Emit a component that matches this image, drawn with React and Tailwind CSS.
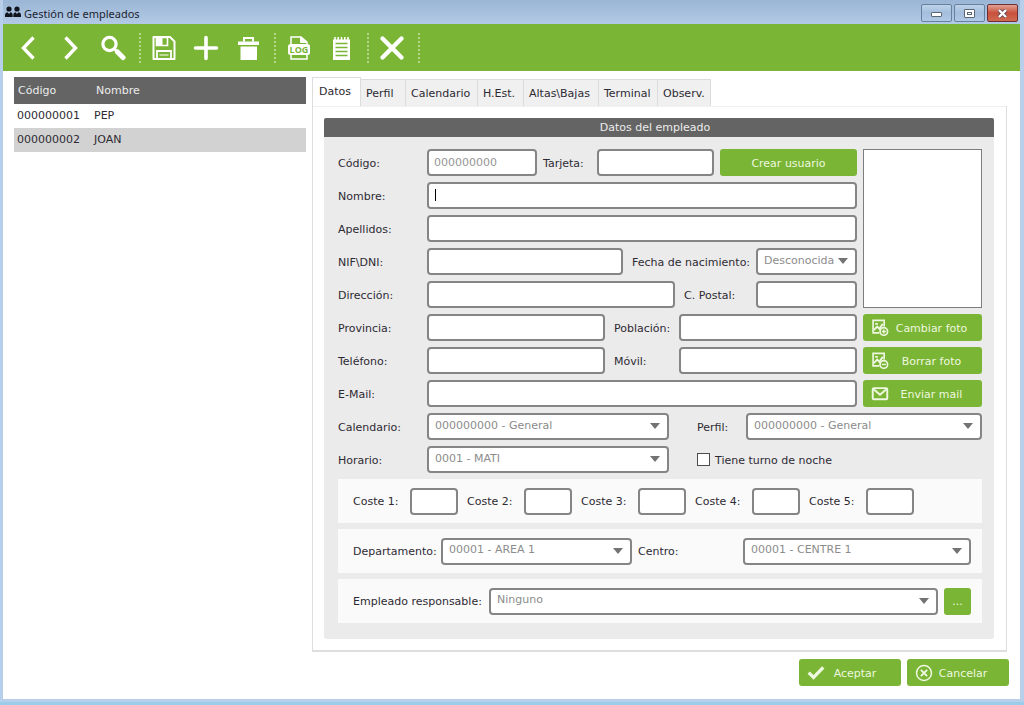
import { useState } from 'react';
import clsx from 'clsx';

const EMPLOYEES = [
  { code: '000000001', name: 'PEP' },
  { code: '000000002', name: 'JOAN' },
];

const TABS = [
  { label: 'Datos', width: 'w-[49px]' },
  { label: 'Perfil', width: 'w-[45px]' },
  { label: 'Calendario', width: 'w-[72px]' },
  { label: 'H.Est.', width: 'w-[46px]' },
  { label: 'Altas\\Bajas', width: 'w-[75px]' },
  { label: 'Terminal', width: 'w-[59px]' },
  { label: 'Observ.', width: 'w-[53px]' },
];

/* ---------- Icons ---------- */

function Icon({ size = 26, children }) {
  return (
    <svg
      width={size}
      height={size}
      viewBox="0 0 26 26"
      fill="none"
      stroke="currentColor"
      aria-hidden="true"
      className="shrink-0"
    >
      {children}
    </svg>
  );
}

const PrevIcon = () => (
  <Icon>
    <path d="M17.500 2.500 7.500 13l10 10.500" strokeWidth="3.400" />
  </Icon>
);

const NextIcon = () => (
  <Icon>
    <path d="M7.500 2.500l10 10.500-10 10.500" strokeWidth="3.400" />
  </Icon>
);

const SearchIcon = () => (
  <Icon>
    <circle cx="9.500" cy="9" r="6.600" strokeWidth="3.200" />
    <path d="M14.500 14l3 3" strokeWidth="3" />
    <path d="M17.500 17l5.500 5.500" strokeWidth="5" strokeLinecap="round" />
  </Icon>
);

const SaveIcon = () => (
  <Icon>
    <path d="M2.500 2h16.500l4.500 4.500V24h-21z" strokeWidth="2" strokeLinejoin="round" />
    <path d="M5.500 2.500h11v8h-11z" strokeWidth="1.600" />
    <path d="M6 2.500h5.500v8H6z" fill="currentColor" stroke="none" />
    <path d="M6 24v-8h14v8" strokeWidth="1.800" />
    <path d="M8.500 20h9" strokeWidth="1" />
  </Icon>
);

const AddIcon = () => (
  <Icon>
    <path d="M13 2.500v21M2.500 13h21" strokeWidth="3.600" strokeLinecap="round" />
  </Icon>
);

const TrashIcon = () => (
  <Icon>
    <path d="M9 6.500V3h9v3.500" strokeWidth="2" />
    <path d="M3 6.500h21v3.500H3zM5.500 11.500h16.500V25H5.500z" fill="currentColor" stroke="none" />
  </Icon>
);

const LogIcon = () => (
  <Icon>
    <path d="M5 9V2h10l6 5v2M5 19v5h16v-5" strokeWidth="1.500" />
    <path d="M14.500 2v5.500H21z" fill="currentColor" strokeWidth="1" />
    <rect x="2" y="9" width="22" height="11" rx="2.500" fill="currentColor" stroke="none" />
    <text
      x="13"
      y="17.500"
      textAnchor="middle"
      fontSize="9"
      fontWeight="700"
      fill="#7ab536"
      stroke="none"
      className="font-['Open_Sans',sans-serif]"
    >
      LOG
    </text>
  </Icon>
);

const NotesIcon = () => (
  <Icon>
    <path d="M5 4.500h17V25H5z" fill="currentColor" stroke="none" />
    <path d="M7 2v3M10.200 2v3M13.500 2v3M16.800 2v3M20 2v3" strokeWidth="1.600" />
    <path
      d="M7.500 8.500h12M7.500 12.500h12M7.500 16.500h12M7.500 20.500h12"
      stroke="#7ab536"
      strokeWidth="1.300"
    />
  </Icon>
);

const CloseIcon = () => (
  <Icon>
    <path d="M3.500 3.500l19 19M22.500 3.500l-19 19" strokeWidth="4.400" strokeLinecap="round" />
  </Icon>
);

function PictureIcon({ minus }) {
  return (
    <Icon size={18}>
      <path d="M12 20H3V2h16v9" strokeWidth="2.400" />
      <path d="M4 16l5-5 3 3 5-7" strokeWidth="2.800" />
      <path d="M6 7h4" strokeWidth="2.400" />
      <circle cx="18.500" cy="18" r="5.500" strokeWidth="2.400" />
      <path d={minus ? 'M15.500 18h6' : 'M15.500 18h6M18.500 15v6'} strokeWidth="2" />
    </Icon>
  );
}

const MailIcon = () => (
  <Icon size={18}>
    <rect x="2.500" y="4.500" width="21" height="16" rx="1.500" strokeWidth="2.800" />
    <path d="M3 5.500l10 8.500 10-8.500" strokeWidth="3" />
  </Icon>
);

const CheckIcon = () => (
  <Icon size={18}>
    <path d="M2.500 12.500l7 7L23.500 5" strokeWidth="4.800" />
  </Icon>
);

const CancelIcon = () => (
  <Icon size={18}>
    <circle cx="13" cy="13" r="10.800" strokeWidth="2.200" />
    <path d="M8.500 8.500l9 9M17.500 8.500l-9 9" strokeWidth="2.800" />
  </Icon>
);

const PeopleIcon = () => (
  <svg width="16" height="12" viewBox="0 0 16 12" fill="#10141c" aria-hidden="true">
    <circle cx="4" cy="3" r="2.600" />
    <circle cx="12" cy="3" r="2.600" />
    <path d="M0 11V9q0-2.500 2.500-2.800L4 8l1.500-1.800Q7.700 6.500 7.700 9v2zM8.300 11V9q0-2.500 2.200-2.800L12 8l1.500-1.800Q16 6.500 16 9v2z" />
  </svg>
);

/* ---------- Controls ---------- */

function ToolButton({ label, children }) {
  return (
    <button type="button" aria-label={label} className="flex w-[42px] items-center justify-center">
      {children}
    </button>
  );
}

const Separator = () => (
  <span className="mr-0.5 ml-[5px] h-[30px] border-l-2 border-dotted border-[#b5d98a]" />
);

function GreenButton({ icon, className, children }) {
  return (
    <button
      type="button"
      className={clsx(
        'flex h-[27px] items-center rounded-[3px] bg-[#7ab536] text-[#eef7df]',
        className
      )}
    >
      {icon}
      <span className="flex-1 pt-0.5 text-center">{children}</span>
    </button>
  );
}

function Label({ htmlFor, className, children }) {
  return (
    <label htmlFor={htmlFor} className={clsx('shrink-0 pt-0.5 whitespace-nowrap', className)}>
      {children}
    </label>
  );
}

function TextInput({ id, className, ...rest }) {
  return (
    <input
      id={id}
      type="text"
      className={clsx(
        'h-[27px] min-w-0 rounded-[4px] border-2 border-[#858585] bg-white px-[5px] outline-none placeholder:text-[#959595]',
        className
      )}
      {...rest}
    />
  );
}

function Select({ id, className, value }) {
  return (
    <div className={clsx('relative min-w-0', className)}>
      <select
        id={id}
        defaultValue={value}
        className="block h-[27px] w-full appearance-none rounded-[4px] border-2 border-[#858585] bg-white pb-0.5 pl-1.5 text-[#8c8c8c] outline-none"
      >
        <option>{value}</option>
      </select>
      <svg
        width="10"
        height="6"
        viewBox="0 0 10 6"
        fill="#737373"
        aria-hidden="true"
        className="pointer-events-none absolute top-[10px] right-[9px]"
      >
        <path d="M0 0h10L5 6z" />
      </svg>
    </div>
  );
}

function Row({ id, label, children }) {
  return (
    <div className="flex h-[27px] items-center">
      <Label htmlFor={id} className="w-[89px]">
        {label}
      </Label>
      {children}
    </div>
  );
}

function Band({ children }) {
  return <div className="flex h-11 items-center bg-[#fafafa] pr-[11px] pl-[15px]">{children}</div>;
}

/* ---------- Sections ---------- */

function TitleBar() {
  const button =
    'flex h-[18px] w-[31px] items-center justify-center rounded-[2px] border border-[#66809f]';

  return (
    <header className="flex h-6 items-center bg-linear-to-b from-[#9ab5d5] to-[#b3cae5] px-0.5">
      <PeopleIcon />
      <h1 className="ml-[3px] flex-1 pt-1 font-['Noto_Sans',sans-serif] text-[11px] text-[#1c2430]">
        Gestión de empleados
      </h1>
      <div className="flex gap-0.5 pt-0.5">
        <button
          type="button"
          aria-label="Minimizar"
          className={clsx(button, 'bg-linear-to-b from-[#bfd3ea] via-[#a3bddb] to-[#b0cae6]')}
        >
          <span className="mt-0.5 h-[5px] w-[11px] rounded-[1px] border border-[#5b6675] bg-white" />
        </button>
        <button
          type="button"
          aria-label="Maximizar"
          className={clsx(button, 'bg-linear-to-b from-[#bfd3ea] via-[#a3bddb] to-[#b0cae6]')}
        >
          <span className="flex h-[9px] w-[11px] items-center justify-center rounded-[1px] border border-[#5b6675] bg-white">
            <span className="h-[3px] w-[5px] border border-[#5b6675]" />
          </span>
        </button>
        <button
          type="button"
          aria-label="Cerrar"
          className="flex h-[18px] w-[31px] items-center justify-center rounded-[2px] border border-[#6b3036] bg-linear-to-b from-[#e0a093] via-[#c8503c] to-[#cf6a50]"
        >
          <svg width="11" height="9" viewBox="0 0 11 9" aria-hidden="true">
            <path d="M2 1l7 7M9 1L2 8" stroke="#5f4a55" strokeWidth="4" />
            <path d="M2 1l7 7M9 1L2 8" stroke="#fff" strokeWidth="2.400" />
          </svg>
        </button>
      </div>
    </header>
  );
}

function ToolBar() {
  return (
    <nav className="flex h-[47px] items-center bg-[#7ab536] pl-[5px] text-white">
      <ToolButton label="Anterior"><PrevIcon /></ToolButton>
      <ToolButton label="Siguiente"><NextIcon /></ToolButton>
      <ToolButton label="Buscar"><SearchIcon /></ToolButton>
      <Separator />
      <ToolButton label="Guardar"><SaveIcon /></ToolButton>
      <ToolButton label="Nuevo"><AddIcon /></ToolButton>
      <ToolButton label="Eliminar"><TrashIcon /></ToolButton>
      <Separator />
      <ToolButton label="Log"><LogIcon /></ToolButton>
      <ToolButton label="Notas"><NotesIcon /></ToolButton>
      <Separator />
      <ToolButton label="Salir"><CloseIcon /></ToolButton>
      <Separator />
    </nav>
  );
}

function EmployeeTable() {
  return (
    <table className="w-[292px] shrink-0 self-start text-left">
      <thead>
        <tr className="h-[27px] bg-[#646464] text-[#ececec]">
          <th className="w-[80px] pl-1 font-normal">Código</th>
          <th className="pl-0.5 font-normal">Nombre</th>
        </tr>
      </thead>
      <tbody>
        {EMPLOYEES.map((employee, i) => (
          <tr key={employee.code} className={clsx('h-6', i % 2 === 1 && 'bg-[#d2d2d2]')}>
            <td className="pl-[3px]">{employee.code}</td>
            <td>{employee.name}</td>
          </tr>
        ))}
      </tbody>
    </table>
  );
}

function EmployeeForm() {
  return (
    <form className="rounded-[3px] bg-[#ebebeb]">
      <h2 className="flex h-[19px] items-center justify-center rounded-t-[2px] bg-[#646464] pr-2 text-[#ececec]">
        Datos del empleado
      </h2>

      <div className="flex flex-col gap-1.5 px-3 pt-3 pb-4 pl-3.5">
        <div className="flex gap-1.5">
          <div className="flex min-w-0 flex-1 flex-col gap-1.5">
            <Row id="codigo" label="Código:">
              <TextInput id="codigo" placeholder="000000000" className="w-[110px]" />
              <Label htmlFor="tarjeta" className="w-[60px] pl-1.5">Tarjeta:</Label>
              <TextInput id="tarjeta" className="w-0 flex-1" />
              <GreenButton className="ml-1.5 w-[137px]">Crear usuario</GreenButton>
            </Row>
            <Row id="nombre" label="Nombre:">
              <div className="relative flex flex-1">
                <TextInput id="nombre" className="flex-1" />
                <span className="absolute top-[7px] left-2 h-3 w-px bg-black" />
              </div>
            </Row>
            <Row id="apellidos" label="Apellidos:">
              <TextInput id="apellidos" className="flex-1" />
            </Row>
            <Row id="nif" label="NIF\DNI:">
              <TextInput id="nif" className="flex-1" />
              <Label htmlFor="nacimiento" className="w-[133px] pl-[9px]">Fecha de nacimiento:</Label>
              <Select id="nacimiento" value="Desconocida" className="w-[101px]" />
            </Row>
            <Row id="direccion" label="Dirección:">
              <TextInput id="direccion" className="flex-1" />
              <Label htmlFor="postal" className="w-[81px] pl-[9px]">C. Postal:</Label>
              <TextInput id="postal" className="w-[101px]" />
            </Row>
            <Row id="provincia" label="Provincia:">
              <TextInput id="provincia" className="w-0 flex-1" />
              <Label htmlFor="poblacion" className="w-[74px] pl-[9px]">Población:</Label>
              <TextInput id="poblacion" className="w-0 flex-1" />
            </Row>
            <Row id="telefono" label="Teléfono:">
              <TextInput id="telefono" className="w-0 flex-1" />
              <Label htmlFor="movil" className="w-[74px] pl-[9px]">Móvil:</Label>
              <TextInput id="movil" className="w-0 flex-1" />
            </Row>
            <Row id="email" label="E-Mail:">
              <TextInput id="email" className="flex-1" />
            </Row>
          </div>

          {/* Photo column */}
          <div className="flex w-[119px] shrink-0 flex-col gap-1.5">
            <div className="flex-1 border border-[#7d7d7d] bg-white" />
            <GreenButton icon={<PictureIcon />} className="pr-2 pl-2">Cambiar foto</GreenButton>
            <GreenButton icon={<PictureIcon minus />} className="pr-2 pl-2">Borrar foto</GreenButton>
            <GreenButton icon={<MailIcon />} className="pr-2 pl-2">Enviar mail</GreenButton>
          </div>
        </div>

        <Row id="calendario" label="Calendario:">
          <Select id="calendario" value="000000000 - General" className="w-[242px]" />
          <Label htmlFor="perfil" className="w-[77px] pl-7">Perfil:</Label>
          <Select id="perfil" value="000000000 - General" className="flex-1" />
        </Row>
        <Row id="horario" label="Horario:">
          <Select id="horario" value="0001 - MATI" className="w-[242px]" />
          <div className="flex items-center pl-7">
            <input
              id="noche"
              type="checkbox"
              className="h-[13px] w-[13px] shrink-0 appearance-none border border-[#4d4d4d] bg-white checked:bg-[#7ab536]"
            />
            <Label htmlFor="noche" className="pl-[5px]">Tiene turno de noche</Label>
          </div>
        </Row>

        <Band>
          {[1, 2, 3, 4, 5].map((n) => (
            <div key={n} className="mr-[9px] flex items-center">
              <Label htmlFor={`coste-${n}`} className="w-[57px]">{`Coste ${n}:`}</Label>
              <TextInput id={`coste-${n}`} className="w-12" />
            </div>
          ))}
        </Band>
        <Band>
          <Label htmlFor="departamento" className="w-[88px]">Departamento:</Label>
          <Select id="departamento" value="00001 - AREA 1" className="w-[191px]" />
          <Label htmlFor="centro" className="w-[111px] pl-1.5">Centro:</Label>
          <Select id="centro" value="00001 - CENTRE 1" className="flex-1" />
        </Band>
        <Band>
          <Label htmlFor="responsable" className="w-[136px]">Empleado responsable:</Label>
          <Select id="responsable" value="Ninguno" className="flex-1" />
          <GreenButton className="ml-1.5 w-[27px]">...</GreenButton>
        </Band>
      </div>
    </form>
  );
}

export default function App() {
  const [tab, setTab] = useState('Datos');

  return (
    <div className="flex min-h-screen flex-col border-b-[3px] border-[#9bcdea] bg-[#b7cfea] pr-1 pb-[3px] pl-[3px] font-['DejaVu_Sans',sans-serif] text-[11px] leading-4 text-[#2e2a33]">
      <TitleBar />
      <ToolBar />

      <main className="flex flex-1 flex-col bg-white px-[11px] pt-1.5 pb-[13px]">
        <div className="flex flex-1 gap-1.5 pr-0.5">
          <EmployeeTable />

          <section className="flex min-w-0 flex-1 flex-col">
            <div role="tablist" className="flex items-end">
              {TABS.map(({ label, width }) => (
                <button
                  key={label}
                  type="button"
                  role="tab"
                  aria-selected={tab === label}
                  onClick={() => setTab(label)}
                  className={clsx(
                    'border-t border-r border-[#dcdcdc] text-left whitespace-nowrap',
                    width,
                    tab === label
                      ? 'h-[29px] border-l bg-white pl-1.5'
                      : 'h-[27px] bg-[#f0f0f0] pt-0.5 pl-[5px]'
                  )}
                >
                  {label}
                </button>
              ))}
              <span className="flex-1" />
            </div>

            <div className="flex-1 border-x border-b-2 border-[#dedede] pt-3 pr-3 pb-[11px] pl-[11px] shadow-[inset_0_1px_0_#f0f0f0]">
              <EmployeeForm />
            </div>
          </section>
        </div>

        <footer className="mt-[7px] flex justify-end gap-1.5">
          <GreenButton icon={<CheckIcon />} className="w-[102px] pr-4 pl-2">Aceptar</GreenButton>
          <GreenButton icon={<CancelIcon />} className="w-[102px] pr-4 pl-2">Cancelar</GreenButton>
        </footer>
      </main>
    </div>
  );
}
